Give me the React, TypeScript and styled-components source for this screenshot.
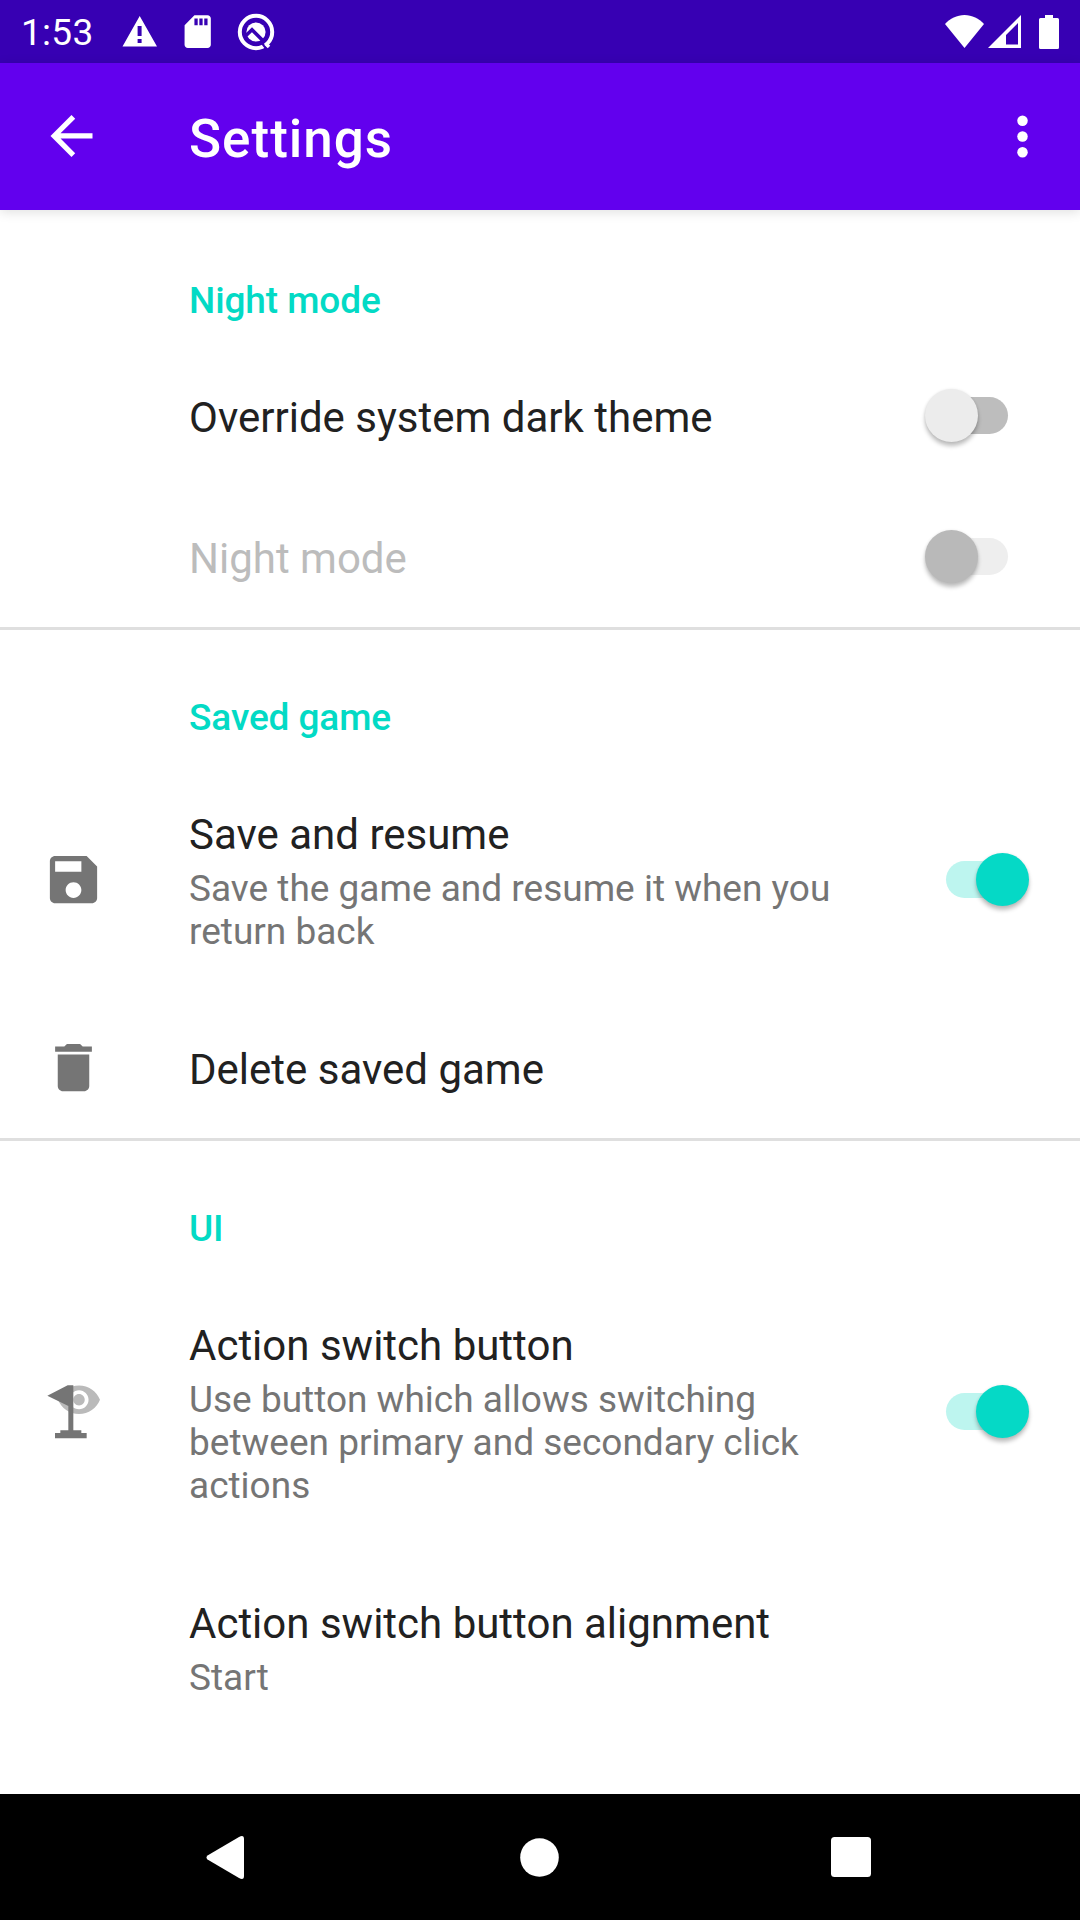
import React from 'react';
import styled, { createGlobalStyle } from 'styled-components';

const GlobalStyle = createGlobalStyle`
  * { box-sizing: border-box; }
  body {
    margin: 0;
    background: #fff;
    font-family: Roboto, "Noto Sans", sans-serif;
  }
`;

const Screen = styled.div`
  width: 1080px;
  height: 1920px;
  display: flex;
  flex-direction: column;
  overflow: hidden;
  background: #fff;
`;

const StatusBar = styled.header`
  flex: none;
  height: 63px;
  display: flex;
  align-items: center;
  justify-content: space-between;
  padding: 0 21px;
  background: #3700b3;
  color: #fff;
`;

const StatusGroup = styled.div`
  display: flex;
  align-items: center;
`;

const Clock = styled.span`
  width: 98px;
  padding-top: 2px;
  font-size: 37px;
  line-height: 43px;
  letter-spacing: 0.3px;
`;

const Glyph = styled.svg<{ $w: number; $h?: number; $gap?: number }>`
  display: block;
  flex: none;
  width: ${(p) => p.$w}px;
  height: ${(p) => p.$h ?? p.$w}px;
  margin-left: ${(p) => p.$gap ?? 0}px;
  fill: currentColor;
`;

const Toolbar = styled.div`
  flex: none;
  z-index: 1;
  height: 147px;
  display: flex;
  align-items: center;
  padding: 0 26px 0 40px;
  background: #6200ee;
  color: #fff;
  box-shadow: 0 2px 11px rgba(0, 0, 0, 0.13);
`;

const IconButton = styled.button`
  display: flex;
  padding: 0;
  border: 0;
  background: none;
  color: inherit;
`;

const ToolbarTitle = styled.h1`
  flex: 1;
  margin: 0;
  padding: 5px 0 0 86px;
  font-size: 53px;
  font-weight: 500;
  line-height: 62px;
  letter-spacing: 1px;
`;

const List = styled.main`
  flex: 1;
  min-height: 0;
  overflow: hidden;
`;

const Section = styled.section`
  & + & {
    box-shadow: inset 0 3px #dfdfdf;
  }
`;

const Category = styled.h2`
  height: 135px;
  margin: 0;
  padding: 69px 0 0 189px;
  color: #03dac5;
  font-size: 37px;
  font-weight: 500;
  line-height: 43px;
  letter-spacing: -0.1px;
`;

const Row = styled.div`
  display: flex;
  align-items: center;
  padding: 0 51px 0 42px;
`;

const IconSlot = styled.div`
  flex: none;
  width: 147px;
  color: #757575;
`;

const RowText = styled.div`
  width: 672px;
  padding: 44px 0 40px;
`;

const RowTitle = styled.div<{ $disabled?: boolean }>`
  color: ${(p) => (p.$disabled ? '#bcbcbc' : '#212121')};
  font-size: 42px;
  line-height: 57px;
  white-space: nowrap;
`;

const Summary = styled.div`
  padding: 4px 0;
  color: #757575;
  font-size: 37px;
  line-height: 43px;
`;

const Track = styled.div<{ $on?: boolean; $disabled?: boolean }>`
  flex: none;
  display: flex;
  align-items: center;
  justify-content: ${(p) => (p.$on ? 'flex-end' : 'flex-start')};
  width: 62px;
  height: 37px;
  margin: 0 21px 1px auto;
  border-radius: 18.5px;
  background: ${(p) => (p.$on ? '#bdf5ef' : p.$disabled ? '#eee' : '#bdbdbd')};
`;

const Thumb = styled.div<{ $on?: boolean; $disabled?: boolean }>`
  flex: none;
  width: 53px;
  height: 53px;
  margin: 0 -21px;
  border-radius: 50%;
  background: ${(p) => (p.$on ? '#05d9c6' : p.$disabled ? '#b9b9b9' : '#ececec')};
  box-shadow: 0 4px 4px rgba(0, 0, 0, 0.25), 0 0 3px rgba(0, 0, 0, 0.08);
`;

const NavBar = styled.nav`
  flex: none;
  height: 126px;
  display: flex;
  align-items: center;
  justify-content: space-between;
  padding: 0 209px 0 206px;
  background: #000;
  color: #fff;
`;

const SaveIcon = () => (
  <Glyph $w={63} viewBox="0 0 24 24">
    <path d="M17 3H5c-1.11 0-2 .9-2 2v14c0 1.1.89 2 2 2h14c1.1 0 2-.9 2-2V7l-4-4zm-5 16c-1.66 0-3-1.34-3-3s1.34-3 3-3 3 1.34 3 3-1.34 3-3 3zm3-10H5V5h10v4z" />
  </Glyph>
);

const DeleteIcon = () => (
  <Glyph $w={63} viewBox="0 0 24 24">
    <path d="M6 19c0 1.1.9 2 2 2h8c1.1 0 2-.9 2-2V7H6v12zM19 4h-3.5l-1-1h-5l-1 1H5v2h14V4z" />
  </Glyph>
);

const FlagEyeIcon = () => (
  <Glyph $w={63} viewBox="36 62 189 189">
    <path
      fill="#bababa"
      transform="translate(78.4 49.4) scale(5.72)"
      d="M12 4.5C7 4.5 2.73 7.61 1 12c1.73 4.39 6 7.5 11 7.5s9.27-3.11 11-7.5c-1.73-4.39-6-7.5-11-7.5zM12 17c-2.76 0-5-2.24-5-5s2.24-5 5-5 5 2.24 5 5-2.24 5-5 5zm0-8c-1.66 0-3 1.34-3 3s1.34 3 3 3 3-1.34 3-3-1.34-3-3-3z"
    />
    <path d="M113 75h17v135h24v8h16v16H75v-16h16v-8h24v-73L52 106z" />
  </Glyph>
);

type SwitchProps = { on?: boolean; disabled?: boolean };

const Switch = ({ on, disabled }: SwitchProps) => (
  <Track $on={on} $disabled={disabled} role="switch" aria-checked={!!on}>
    <Thumb $on={on} $disabled={disabled} />
  </Track>
);

type PreferenceProps = {
  title: string;
  summary?: string;
  icon?: React.ReactNode;
  disabled?: boolean;
  toggle?: 'on' | 'off';
};

const Preference = ({ title, summary, icon, disabled, toggle }: PreferenceProps) => (
  <Row>
    <IconSlot>{icon}</IconSlot>
    <RowText>
      <RowTitle $disabled={disabled}>{title}</RowTitle>
      {summary && <Summary>{summary}</Summary>}
    </RowText>
    {toggle && <Switch on={toggle === 'on'} disabled={disabled} />}
  </Row>
);

export default function App() {
  return (
    <>
      <GlobalStyle />
      <Screen>
        <StatusBar>
          <StatusGroup>
            <Clock>1:53</Clock>
            <Glyph $w={39} $gap={1} viewBox="0 0 39 39">
              <path d="M2.5 34.5h34.5L19.7 4zM21.6 31v-4h-4v4zM21.6 24v-10h-4v10z" fillRule="evenodd" />
            </Glyph>
            <Glyph $w={39.4} $gap={19.4} viewBox="0 0 24 24">
              <path d="M18 2h-8L4.02 8 4 20c0 1.1.9 2 2 2h12c1.1 0 2-.9 2-2V4c0-1.1-.9-2-2-2zm-6 6h-2V4h2v4zm3 0h-2V4h2v4zm3 0h-2V4h2v4z" />
            </Glyph>
            <Glyph $w={38} $gap={19} viewBox="0 0 38 38">
              <circle cx="19" cy="19" r="16.2" fill="none" stroke="currentColor" strokeWidth="4" />
              <circle cx="19" cy="19" r="9.6" />
              <path d="M9 22.5L15 16.8L27.5 29.3" fill="none" stroke="#3700b3" strokeWidth="3.6" />
              <path d="M25 30L30.5 37" fill="none" stroke="#3700b3" strokeWidth="2.6" />
              <path d="M28.5 30.5L32 34" fill="none" stroke="currentColor" strokeWidth="3.6" />
            </Glyph>
          </StatusGroup>
          <StatusGroup>
            <Glyph $w={39} $h={33} viewBox="0 0 39 33">
              <path d="M19.5 33L0 9C5 3.5 12 0 19.5 0S34 3.5 39 9z" />
            </Glyph>
            <Glyph $w={33} $h={33} $gap={3.5} viewBox="0 0 33 33">
              <path fillRule="evenodd" d="M0 33L33 0v33zM18 20v9.5h12V8z" />
            </Glyph>
            <Glyph $w={20} $h={34} $gap={18.5} viewBox="0 0 20 34">
              <path d="M6 0h8v3h4.5q1.5 0 1.5 1.5v28q0 1.5-1.5 1.5h-17Q0 34 0 32.5v-28Q0 3 1.5 3H6z" />
            </Glyph>
          </StatusGroup>
        </StatusBar>
        <Toolbar>
          <IconButton aria-label="Back">
            <Glyph $w={63} viewBox="0 0.2 24 24">
              <path d="M20 11H7.83l5.59-5.59L12 4l-8 8 8 8 1.41-1.41L7.83 13H20v-2z" />
            </Glyph>
          </IconButton>
          <ToolbarTitle>Settings</ToolbarTitle>
          <IconButton aria-label="More options">
            <Glyph $w={63} viewBox="0 0 24 24">
              <circle cx="12" cy="6" r="2" />
              <circle cx="12" cy="12" r="2" />
              <circle cx="12" cy="18" r="2" />
            </Glyph>
          </IconButton>
        </Toolbar>
        <List>
          <Section>
            <Category>Night mode</Category>
            <Preference title="Override system dark theme" toggle="off" />
            <Preference title="Night mode" toggle="off" disabled />
          </Section>
          <Section>
            <Category>Saved game</Category>
            <Preference
              icon={<SaveIcon />}
              title="Save and resume"
              summary="Save the game and resume it when you return back"
              toggle="on"
            />
            <Preference icon={<DeleteIcon />} title="Delete saved game" />
          </Section>
          <Section>
            <Category>UI</Category>
            <Preference
              icon={<FlagEyeIcon />}
              title="Action switch button"
              summary="Use button which allows switching between primary and secondary click actions"
              toggle="on"
            />
            <Preference title="Action switch button alignment" summary="Start" />
          </Section>
        </List>
        <NavBar>
          <Glyph $w={38} $h={43} viewBox="0 0 38 43">
            <path d="M1.5 19.5L33 1Q38-1.5 38 3v37q0 4.5-5 2L1.5 23.5q-2-2 0-4z" />
          </Glyph>
          <Glyph $w={39} $gap={4} viewBox="0 0 39 39">
            <circle cx="19.5" cy="19.5" r="19.3" />
          </Glyph>
          <Glyph $w={40} viewBox="0 0 40 40">
            <rect width="40" height="40" rx="3.5" />
          </Glyph>
        </NavBar>
      </Screen>
    </>
  );
}
